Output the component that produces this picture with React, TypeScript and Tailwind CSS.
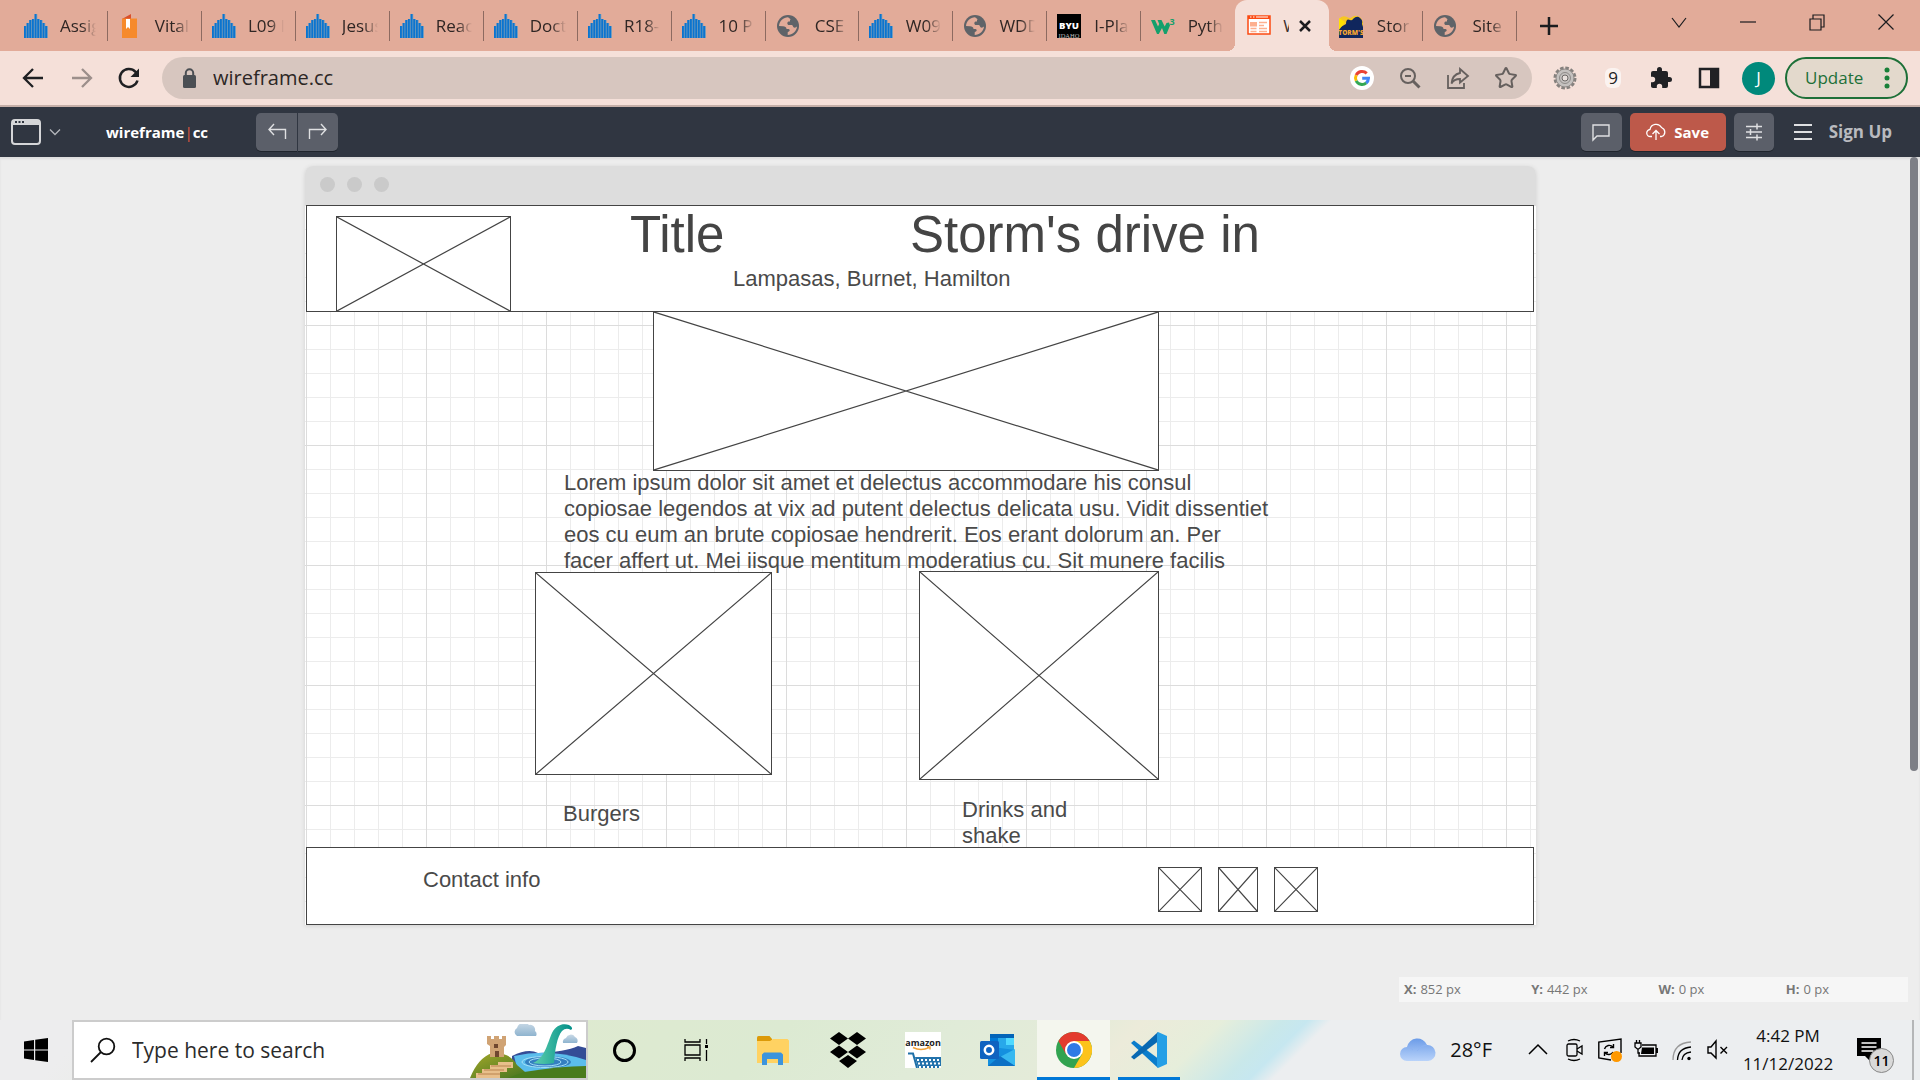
import React from "react";
import { Star } from "lucide-react";

type P = { className?: string };

const Idaho = () => (
  <svg viewBox="0 0 24 24" className="size-6 shrink-0" aria-hidden="true">
    {[12, 9, 6, 5, 0, 5, 6, 9, 12].map((y, i) => (
      <g key={i}>
        <rect x={i * 2.65} y={y} width="2.650" height={24 - y} fill="#6f9dbf" />
        <rect x={i * 2.65} y={y} width="1.850" height={24 - y} fill="#0b74cf" />
      </g>
    ))}
  </svg>
);
const Vital = () => (
  <svg viewBox="0 0 24 24" className="size-6 shrink-0" aria-hidden="true">
    <path d="M4 5 L13 0 V5Z" fill="#d9502c" />
    <path d="M4 4.500h15V24H4Z" fill="#f68a2c" />
    <path d="M8 5h4v10l-2-2-2 2Z" fill="#fff" />
  </svg>
);
const Globe = () => (
  <svg viewBox="0 0 24 24" className="size-6 shrink-0" aria-hidden="true">
    <circle cx="12" cy="12" r="11" fill="#5f6368" />
    <path d="M12 3.200c-4.500.2-8.600 3.500-9 8.800l4 .2c2 0 3.500 1 3.500 2.800h2c1 0 1.500 1 1 2l-1.800 1.200v2.800c4.700 0 9-3.600 9.300-8.400-1 1-2.500 1.400-3.500.6-.8-.8-.5-1.700-1.500-2.100h-3c-2-.3-2.200-2.800-.4-3.600l1.400-.1V5.500h1Z" fill="#e2ab99" />
  </svg>
);
const Byu = () => (
  <svg viewBox="0 0 24 24" className="size-6 shrink-0" aria-hidden="true">
    <rect width="24" height="24" fill="#000" />
    <text x="12" y="15" textAnchor="middle" fontSize="9.500" fontWeight="800" fill="#fff" fontFamily="Open Sans, sans-serif">BYU</text>
    <text x="12" y="23.500" textAnchor="middle" fontSize="6.500" fill="#bbb" fontFamily="Liberation Serif, serif">IDAHO</text>
  </svg>
);
const W3 = () => (
  <svg viewBox="0 0 24 24" className="size-6 shrink-0" aria-hidden="true">
    <path d="M0 6h4l3 6.500 1.200-2.500L6.500 6h4l3.200 6.500L15.500 9l2.500-.5 1 3L15.500 20h-2.200L11 14l-3.200 6H6Z" fill="#14a06c" />
    <text x="18.500" y="11" fontSize="9" fontWeight="700" fill="#14a06c" fontFamily="Open Sans, sans-serif">3</text>
  </svg>
);
const WireFav = () => (
  <svg viewBox="0 0 24 24" className="size-6 shrink-0" aria-hidden="true">
    <rect x="1" y="2" width="22" height="18" fill="#fff" stroke="#fb4a12" strokeWidth="1.500" />
    <path d="M1 2h22v3H1Z" fill="#fb4a12" />
    <path d="M3 3h1.500M6 3h1.500M9 3h12" stroke="#fff" strokeWidth="1.200" />
    <rect x="3" y="8" width="7" height="4.500" fill="#fdb08f" />
    <path d="M12 8.500h8M12 11.500h5M3.500 14.500h6M12 14.500h8M3.500 17.500h6M12 17.500h8" stroke="#fdb08f" strokeWidth="1.300" />
  </svg>
);
const StormFav = () => (
  <svg viewBox="0 0 24 24" className="size-6 shrink-0" aria-hidden="true">
    <path d="M0 5 Q3 1 8 3 Q11 5 13 3 Q17 0 22 4 L24 8V24H0Z" fill="#f6c622" />
    <path d="M7 10Q7 4 11 6 Q13 7 14 5 Q18 1 21 4 Q24 6 23 10 L24 13V24H0V14Z" fill="#10265d" />
    <path d="M0 4l6 4-6 8Z" fill="#ffe100" />
    <text x="12" y="21" textAnchor="middle" fontSize="6.500" fontWeight="800" fill="#f7a531" fontFamily="Open Sans, sans-serif">TORM'S</text>
  </svg>
);

const tabs: { label: string; Icon: React.FC; active?: boolean }[] = [
  { label: "Assig", Icon: Idaho },
  { label: "Vital", Icon: Vital },
  { label: "L09 I", Icon: Idaho },
  { label: "Jesus", Icon: Idaho },
  { label: "Reac", Icon: Idaho },
  { label: "Doct", Icon: Idaho },
  { label: "R18-", Icon: Idaho },
  { label: "10 P", Icon: Idaho },
  { label: "CSE", Icon: Globe },
  { label: "W09", Icon: Idaho },
  { label: "WDD", Icon: Globe },
  { label: "I-Pla", Icon: Byu },
  { label: "Pyth", Icon: W3 },
  { label: "W", Icon: WireFav, active: true },
  { label: "Stor", Icon: StormFav },
  { label: "Site", Icon: Globe },
];

function TabStrip() {
  return (
    <div className="flex h-[51px] items-stretch bg-[#e2ab99] pl-[14px]">
      <div className="flex max-w-[1503px] flex-1" role="tablist">
        {tabs.map(({ label, Icon, active }, i) =>
          active ? (
            <div key={i} className="relative flex min-w-0 flex-1 items-center rounded-t-xl bg-[#f5e0d9] before:absolute before:bottom-0 before:-left-2 before:size-2 before:bg-[radial-gradient(circle_at_0_0,transparent_8px,#f5e0d9_8px)] after:absolute after:-right-2 after:bottom-0 after:size-2 after:bg-[radial-gradient(circle_at_100%_0,transparent_8px,#f5e0d9_8px)]">
              <button role="tab" aria-selected="true" className="ml-3 flex items-center gap-3">
                <Icon />
                <span className="w-[6px] overflow-hidden text-[17px] text-[#3c2f2c]">{label}</span>
              </button>
              <button aria-label="Close tab" className="ml-1">
                <svg viewBox="0 0 24 24" className="size-6" stroke="#1b1c1f" strokeWidth="2.500"><path d="M7 7l10 10M17 7L7 17" /></svg>
              </button>
            </div>
          ) : (
            <div key={i} className="flex min-w-0 flex-1 items-center">
              <button role="tab" aria-selected="false" className="flex min-w-0 flex-1 items-center gap-3 pl-[10px]">
                <Icon />
                <span className="w-9 overflow-hidden text-[17px] whitespace-nowrap text-[#2f2624] [mask-image:linear-gradient(to_right,black_60%,transparent)]">{label}</span>
              </button>
              {tabs[i + 1]?.active ? null : <span className="h-[30px] w-px shrink-0 bg-[#8d6a60]" />}
            </div>
          ),
        )}
      </div>
      <button aria-label="New tab" className="ml-5">
        <svg viewBox="0 0 24 24" className="size-6" stroke="#1b1c1f" strokeWidth="2.500"><path d="M3 12h18M12 3v18" /></svg>
      </button>
      <div className="ml-auto flex h-[43px] items-stretch">
        {[
          ["Search tabs", "M5 8l7 9 7-9"],
          ["Minimize", "M4 12h16"],
          ["Restore", "M5 9h11v11H5ZM8 9V5h11v12h-3"],
          ["Close", "M4.500 4.500l15 15M19.500 4.500l-15 15"],
        ].map(([n, d]) => (
          <button key={n} aria-label={n} className="flex w-[69px] items-center justify-center">
            <svg viewBox="0 0 24 24" className="size-6" fill="none" stroke="#1b1c1f" strokeWidth="1.200"><path d={d} /></svg>
          </button>
        ))}
      </div>
    </div>
  );
}

const GoogleG = ({ className }: P) => (
  <svg viewBox="0 0 24 24" className={className} aria-hidden="true">
    <circle cx="12" cy="12" r="12" fill="#fff" />
    <g fill="none" strokeWidth="3">
      <path d="M6.200 9.200A6.500 6.500 0 0 1 16.700 7.400" stroke="#ea4335" />
      <path d="M6.200 9.100A6.500 6.500 0 0 0 6.200 14.900" stroke="#fbbc05" />
      <path d="M6.200 14.800A6.500 6.500 0 0 0 16.300 16.900" stroke="#34a853" />
      <path d="M12.200 12.200H18.500A6.500 6.500 0 0 1 16.200 17" stroke="#4285f4" />
    </g>
  </svg>
);

function Toolbar() {
  return (
    <div className="flex h-14 items-center border-b-2 border-[#c5afa8] bg-[#f5e0d9] pr-3 pl-[21px]">
      <div className="flex gap-6">
        <button aria-label="Back"><svg viewBox="0 0 24 24" className="size-6" fill="none" stroke="#1f2023" strokeWidth="2.300"><path d="M22 12H3.500M12 3L3 12l9 9" /></svg></button>
        <button aria-label="Forward"><svg viewBox="0 0 24 24" className="size-6" fill="none" stroke="#9c8f8b" strokeWidth="2.300"><path d="M3 12h18M13 3l9 9-9 9" /></svg></button>
        <button aria-label="Reload"><svg viewBox="0 0 24 24" className="size-6" fill="none" stroke="#1f2023" strokeWidth="2.500"><path d="M20.500 14.500A9 9 0 1 1 18.500 5.800L20 7.500" /><path d="M22 2.500v8.500h-8.500Z" fill="#1f2023" stroke="none" /></svg></button>
      </div>
      <div className="ml-[21px] flex h-[42px] flex-1 items-center rounded-full bg-[#d7c6bf] pr-[14px] pl-[18px]">
        <svg viewBox="0 0 18 24" className="h-6 w-[18px]" aria-hidden="true"><rect x="3" y="9" width="13" height="13" rx="1.500" fill="#4b4f54" /><path d="M5.800 9V7a3.700 3.700 0 0 1 7.400 0v2" fill="none" stroke="#4b4f54" strokeWidth="2" /></svg>
        <input aria-label="Address" defaultValue="wireframe.cc" className="ml-[15px] min-w-0 flex-1 bg-transparent text-[20px] text-[#2c2625] outline-none" />
        <div className="flex gap-6 text-[#66605e]">
          <button aria-label="Google search"><GoogleG className="size-6" /></button>
          <button aria-label="Zoom out"><svg viewBox="0 0 24 24" className="size-6" fill="none" stroke="currentColor" strokeWidth="2"><circle cx="10" cy="10" r="7" /><path d="M15 15l6.500 6.500" strokeWidth="3" /><path d="M7 10h6" /></svg></button>
          <button aria-label="Share"><svg viewBox="0 0 24 24" className="size-6" fill="none" stroke="currentColor" strokeWidth="1.800"><path d="M2 9v13h16v-5" /><path d="M14 3l8 7-8 6.500V13C10 13 7 14.500 5.500 17.500 6 12 9 8 14 7Z" /></svg></button>
          <button aria-label="Bookmark"><Star className="size-6" strokeWidth={2} strokeLinejoin="miter" /></button>
        </div>
      </div>
      <div className="ml-[21px] flex items-center gap-6">
        <button aria-label="Extension settings"><svg viewBox="0 0 24 24" className="size-6"><circle cx="12" cy="12" r="10" fill="none" stroke="#85817e" strokeWidth="3" strokeDasharray="3.500 1.736" /><circle cx="12" cy="12" r="9" fill="#c4c1bf" stroke="#8d8987" /><circle cx="12" cy="12" r="5.500" fill="none" stroke="#8e8b89" /><circle cx="12" cy="12" r="3" fill="#e8e0dd" stroke="#6d6a68" /></svg></button>
        <button aria-label="Nine extension" className="flex size-6 items-center justify-center rounded-full"><span className="rounded-md bg-white/60 px-[3px] text-[17px] leading-5 text-[#222]">9</span></button>
        <button aria-label="Extensions"><svg viewBox="0 0 24 24" className="size-6" fill="#202124"><path d="M20.500 11H19V7a2 2 0 0 0-2-2h-4V3.500a2.500 2.500 0 0 0-5 0V5H4a2 2 0 0 0-2 2v3.800h1.500a2.700 2.700 0 0 1 0 5.400H2V20c0 1.100.9 2 2 2h3.800v-1.500a2.700 2.700 0 0 1 5.400 0V22H17a2 2 0 0 0 2-2v-4h1.500a2.500 2.500 0 0 0 0-5Z" /></svg></button>
        <button aria-label="Side panel"><svg viewBox="0 0 24 24" className="size-6"><rect x="3" y="3" width="18" height="18" fill="none" stroke="#202124" strokeWidth="2.500" /><rect x="13" y="3" width="8" height="18" fill="#202124" /></svg></button>
        <button aria-label="Profile" className="-ml-[3px] flex size-[33px] items-center justify-center rounded-full bg-[#00897b] text-[17px] text-white">J</button>
      </div>
      <button className="ml-[10px] flex h-[42px] w-[123px] items-center justify-between rounded-full border-2 border-[#1d7038] bg-[#e3d9cc] pr-4 pl-[18px] text-[17px] text-[#1d7038]">
        Update
        <svg viewBox="0 0 6 24" className="h-6 w-[6px]" fill="#188038" aria-hidden="true"><circle cx="3" cy="4" r="2.500" /><circle cx="3" cy="12" r="2.500" /><circle cx="3" cy="20" r="2.500" /></svg>
      </button>
    </div>
  );
}

function EditorBar() {
  const tool = "flex h-[38px] items-center justify-center bg-[#5b5f69] shadow-[0_1px_0_#1f242c]";
  return (
    <header className="flex h-[50px] items-center bg-[#303641] pr-7 pl-[11px]">
      <button aria-label="Canvas size" className="flex items-center gap-2">
        <svg viewBox="0 0 30 26" className="h-[26px] w-[30px]"><rect x="1" y="1" width="28" height="24" rx="3" fill="none" stroke="#d5d6d8" strokeWidth="2" /><path d="M1 1h28v5H1Z" fill="#d5d6d8" /><path d="M4 3h2M7.500 3h2M11 3h2" stroke="#303641" strokeWidth="2" /></svg>
        <svg viewBox="0 0 12 12" className="size-3" fill="none" stroke="#b3b6bb" strokeWidth="1.300"><path d="M1 3.500l5 5 5-5" /></svg>
      </button>
      <a href="#" className="ml-[45px] text-[15px] font-bold text-white">wireframe<span className="font-normal text-[#e0573e]">|</span>cc</a>
      <div className="ml-12 flex gap-px">
        <button aria-label="Undo" className={tool + " w-[41px] rounded-l-[5px]"}>
          <svg viewBox="0 0 20 20" className="size-5" fill="none" stroke="#dfe0e2" strokeWidth="1.400"><path d="M7 2L2 7.500 7 13M2 7.500h16.500V17" /></svg>
        </button>
        <button aria-label="Redo" className={tool + " w-10 rounded-r-[5px]"}>
          <svg viewBox="0 0 20 20" className="size-5" fill="none" stroke="#dfe0e2" strokeWidth="1.400"><path d="M13 2l5 5.500-5 5.500M18 7.500H1.500V17" /></svg>
        </button>
      </div>
      <div className="ml-auto flex items-center gap-2">
        <button aria-label="Comments" className={tool + " w-[41px] rounded-[5px]"}>
          <svg viewBox="0 0 20 20" className="size-5" fill="none" stroke="#dfe0e2" strokeWidth="1.400"><path d="M2 3h16v11H6l-4 4Z" /></svg>
        </button>
        <button className="flex h-[38px] w-24 items-center justify-center gap-2 rounded-[5px] bg-[#bd594a] text-[15px] font-bold text-white shadow-[0_1px_0_#1f242c]">
          <svg viewBox="0 0 20 20" className="size-5" fill="none" stroke="#fff" strokeWidth="1.300" aria-hidden="true"><path d="M6 14.500H4.500a3.500 3.500 0 0 1-.5-7A6.200 6.200 0 0 1 15.500 5.500c4.500 2 4.300 7.500 0 9H14M10 18V8.500M6.500 12L10 8.500l3.500 3.500" /></svg>
          Save
        </button>
        <button aria-label="Settings" className={tool + " w-10 rounded-[5px]"}>
          <svg viewBox="0 0 20 20" className="size-5" fill="none" stroke="#dfe0e2" strokeWidth="1.500"><path d="M2 4.500h16M2 10h16M2 15.500h16M13 1.500v6M6.500 7v6M13 12.500v6" /></svg>
        </button>
        <button className="ml-[11px] flex items-center gap-4 text-[17px] font-bold text-[#b9bbbf]">
          <svg viewBox="0 0 20 20" className="size-5" stroke="#dfe0e2" strokeWidth="1.800" aria-hidden="true"><path d="M1 3h18M1 10h18M1 17h18" /></svg>
          Sign Up
        </button>
      </div>
    </header>
  );
}

const ImageBox = ({ className }: P) => (
  <div className={"absolute border border-[#444] bg-white " + className}>
    <svg viewBox="0 0 100 100" preserveAspectRatio="none" className="block size-full" stroke="#444" aria-hidden="true">
      <path d="M0 0L100 100M100 0L0 100" vectorEffect="non-scaling-stroke" strokeWidth="1.200" />
    </svg>
  </div>
);

const canvasText = "font-['Liberation_Sans',Arial,sans-serif] text-[22px] leading-[26px] text-[#4a4a4a]";
const canvasTitle = "font-['Liberation_Sans',Arial,sans-serif] text-[51px] leading-[58px] text-[#444]";

function Workspace() {
  return (
    <main className="relative min-h-0 flex-1 bg-[#ededed] shadow-[inset_0_2px_2px_#dedede]">
      <div className="flex justify-center pt-[9px] pr-[79px]">
        <section className="w-[1231px] shrink-0 rounded-t-lg shadow-[0_1px_4px_#d0d0d0]">
          <div className="flex h-[39px] items-center gap-3 rounded-t-lg bg-[#ddd] pb-[3px] pl-[15px]">
            <span className="size-[15px] rounded-full bg-[#cacaca]" />
            <span className="size-[15px] rounded-full bg-[#cacaca]" />
            <span className="size-[15px] rounded-full bg-[#cacaca]" />
          </div>
          {/* Free-form drawing sheet: items sit where the user dropped them. */}
          <div className="relative h-[720px] bg-white bg-[linear-gradient(to_right,#dcdcdc_1px,transparent_1px),linear-gradient(to_bottom,#dcdcdc_1px,transparent_1px),linear-gradient(to_right,#ececec_1px,transparent_1px),linear-gradient(to_bottom,#ececec_1px,transparent_1px)] bg-[size:120px_120px,120px_120px,24px_24px,24px_24px] bg-position-[1px_0px]">
            <div className="absolute top-0 left-[1px] h-[107px] w-[1228px] border border-[#444] bg-white" />
            <ImageBox className="top-[11px] left-[31px] h-24 w-[175px]" />
            <h1 className={"absolute top-[1px] left-[325px] " + canvasTitle}>Title</h1>
            <h2 className={"absolute top-[1px] left-[605px] whitespace-nowrap " + canvasTitle}>Storm's drive in</h2>
            <p className={"absolute top-[61px] left-[428px] " + canvasText}>Lampasas, Burnet, Hamilton</p>
            <ImageBox className="top-[106px] left-[348px] h-[160px] w-[506px]" />
            <p className={"absolute top-[265px] left-[259px] whitespace-nowrap " + canvasText}>
              Lorem ipsum dolor sit amet et delectus accommodare his consul<br />
              copiosae legendos at vix ad putent delectus delicata usu. Vidit dissentiet<br />
              eos cu eum an brute copiosae hendrerit. Eos erant dolorum an. Per<br />
              facer affert ut. Mei iisque mentitum moderatius cu. Sit munere facilis
            </p>
            <ImageBox className="top-[367px] left-[230px] h-[203px] w-[237px]" />
            <ImageBox className="top-[366px] left-[614px] h-[209px] w-[240px]" />
            <p className={"absolute top-[596px] left-[258px] " + canvasText}>Burgers</p>
            <p className={"absolute top-[592px] left-[657px] " + canvasText}>Drinks and<br />shake</p>
            <div className="absolute top-[642px] left-[1px] h-[78px] w-[1228px] border border-[#444] bg-white" />
            <p className={"absolute top-[662px] left-[118px] " + canvasText}>Contact info</p>
            <ImageBox className="top-[662px] left-[853px] h-[45px] w-11" />
            <ImageBox className="top-[662px] left-[913px] h-[45px] w-10" />
            <ImageBox className="top-[662px] left-[969px] h-[45px] w-11" />
          </div>
        </section>
      </div>
      <dl className="absolute right-3 bottom-[18px] grid h-[25px] w-[509px] grid-cols-4 items-center bg-[#f6f6f6] text-[13px] text-[#777]">
        {[["X:", "852 px"], ["Y:", "442 px"], ["W:", "0 px"], ["H:", "0 px"]].map(([k, v]) => (
          <div key={k} className="flex gap-1 pl-[5px]"><dt className="font-bold">{k}</dt><dd>{v}</dd></div>
        ))}
      </dl>
      <div className="absolute top-0 right-[2px] h-[614px] w-2 rounded-full bg-[#7d7f86]" />
    </main>
  );
}

const SearchArt = () => (
  <svg viewBox="0 0 116 54" className="h-[54px] w-[116px] self-end" aria-hidden="true">
    <defs>
      <linearGradient id="cl" x1="0" y1="0" x2="0" y2="1"><stop offset="0" stopColor="#c9d9e6" /><stop offset="1" stopColor="#8fb4cf" /></linearGradient>
      <linearGradient id="hill" x1="0" y1="0" x2="1" y2="1"><stop offset="0" stopColor="#a5a82a" /><stop offset="1" stopColor="#3f7220" /></linearGradient>
      <linearGradient id="nes" x1="0" y1="0" x2="1" y2="0"><stop offset="0" stopColor="#5fd0ae" /><stop offset="1" stopColor="#008e88" /></linearGradient>
    </defs>
    <path d="M47 12a4.500 4.500 0 0 1 0-8 7 7 0 0 1 12-3 5 5 0 0 1 6 6 4 4 0 0 1 1 5Z" fill="url(#cl)" />
    <path d="M93 19a4 4 0 0 1 3-5 5 5 0 0 1 9-1 4 4 0 0 1 2 6Z" fill="url(#cl)" />
    <path d="M42 32Q58 24 68 29Q95 28 108 22L116 24V54H42Z" fill="#344c96" />
    <path d="M44 32Q80 24 116 36V48H48Z" fill="#5bbdec" />
    <ellipse cx="78" cy="38" rx="23" ry="6" fill="#347fc0" />
    <ellipse cx="75" cy="38" rx="23" ry="5.500" fill="none" stroke="#a5e0f8" />
    <ellipse cx="75" cy="38" rx="16" ry="4" fill="none" stroke="#a5e0f8" />
    <path d="M63 39C75 34 77 20 82 9C86 1 93-1 99 1Q104 4 101 6Q96 3 92 7C87 13 85 26 84 39Q75 41 63 39Z" fill="url(#nes)" />
    <path d="M0 54Q8 34 22 29Q40 28 47 41L62 54Z" fill="url(#hill)" />
    <path d="M54 48Q90 42 116 42V54H38Z" fill="#497b1d" />
    <path d="M17 12h4v3h3v-3h5v3h3v-3h4v9l-2 2v10H20V22l-3-2Z" fill="#d0a374" />
    <path d="M24 20h4v4h-4ZM25 27h4v6h-4Z" fill="#70472f" />
    <path d="M28 38h15v6h-6v4h-7v6H6v-5h6v-4h8v-4h8Z" fill="#e8bf8b" />
    <path d="M8 50h22M14 46h20M21 42h20" stroke="#b9834e" />
  </svg>
);

function Taskbar() {
  const app = "flex w-[75px] items-center justify-center";
  return (
    <footer className="flex h-[60px] shrink-0 items-stretch bg-[linear-gradient(135deg,#ededee_0,#ededee_70px,#deead0_400px,#dcead2_560px,#e0ebd8_680px,#e4ebd9_770px,#ecebda_810px,#e6eedb_865px,#c9e8ea_908px,#c6e7f0_925px,#eceef0_942px)]">
      <button aria-label="Start" className="flex w-[72px] items-center justify-center">
        <svg viewBox="0 0 24 24" className="size-6"><path d="M0 3.500L10 2v9.500H0ZM11.200 1.800L24 0v11.500H11.200ZM0 12.500h10V22L0 20.600ZM11.200 12.500H24V24l-12.800-1.800Z" /></svg>
      </button>
      <label className="flex w-[516px] items-center border-2 border-[#ccc] bg-white pl-4">
        <svg viewBox="0 0 26 26" className="size-[26px]" fill="none" stroke="#111" strokeWidth="1.800" aria-hidden="true"><circle cx="16.500" cy="9.500" r="7.800" /><path d="M11 15L1 25" /></svg>
        <input aria-label="Search" placeholder="Type here to search" className="ml-4 min-w-0 flex-1 bg-transparent pt-[2px] text-[21px] outline-none placeholder:text-[#2b2b2b]" />
        <SearchArt />
      </label>
      <button aria-label="Cortana" className="flex w-[72px] items-center justify-center"><span className="size-[23px] rounded-full border-[3px] border-black" /></button>
      <button aria-label="Task view" className="flex w-[72px] items-center justify-center">
        <svg viewBox="0 0 24 24" className="size-6" fill="none" stroke="#000" strokeWidth="1.300"><path d="M1 1v3h15V1M1 7h15v10H1ZM1 23v-3h15v3M22.500 1v5M22.500 12v11" /><rect x="21" y="7" width="3" height="3" fill="#000" stroke="none" /></svg>
      </button>
      <div className="flex pr-[2px] pl-[3px]">
        <button aria-label="File Explorer" className={app}>
          <svg viewBox="0 0 32 32" className="size-8"><path d="M0 3.500Q0 2 1.500 2h11L15 5v5H0Z" fill="#dc9a08" /><path d="M0 7h13l3-2h14.500L32 6.500V29H0Z" fill="#ffd262" /><path d="M5 31V20.500L7 18.500h17l2 2V31h-5v-6H10v6Z" fill="#3d94dc" /></svg>
        </button>
        <button aria-label="Dropbox" className={app}>
          <svg viewBox="0 0 36 36" className="size-9"><path d="M9 0l9 6.500L9 13 0 6.500ZM27 0l9 6.500-9 6.500-9-6.500ZM9 13.500l9 6.500-9 6.500L0 20ZM27 13.500l9 6.500-9 6.500-9-6.500ZM18 23l9 6-9 7-9-7Z" /></svg>
        </button>
        <button aria-label="Amazon" className={app}>
          <svg viewBox="0 0 36 36" className="size-9"><rect width="36" height="36" fill="#fff" /><text x="18" y="14" textAnchor="middle" fontSize="9" fontWeight="700" fontFamily="Open Sans, sans-serif" fill="#222">amazon</text><path d="M8 15.500Q16 19.500 24 15.500M22 15h3v2.500" fill="none" stroke="#f0a23a" strokeWidth="1.500" /><path d="M3 21.500h5l4 14.500" fill="none" stroke="#1e70a8" strokeWidth="2" /><path d="M10 25h26v11H13Z" fill="#2373ac" /><path d="M12 28h24M13 31.500h23M14 35h22" stroke="#fff" strokeWidth="1.800" strokeDasharray="2 2" /></svg>
        </button>
        <button aria-label="Outlook" className={app}>
          <svg viewBox="0 0 36 36" className="size-9"><path d="M10 2h24v16H10Z" fill="#28a8ea" /><path d="M10 2h24v4H10Z" fill="#0364b8" /><path d="M10 6h8v12h-8Z" fill="#0078d4" /><path d="M26 6h8v7h-8Z" fill="#50d9ff" /><path d="M8 16h12l15 2v16H8Z" fill="#1490df" /><path d="M35 17L20 25l15 9Z" fill="#37b8f0" /><path d="M20 24L8 34h27Z" fill="#0c70c5" /><rect y="9" width="19" height="18" rx="1.500" fill="#0f63c0" /><circle cx="9" cy="18" r="4.200" fill="none" stroke="#fff" strokeWidth="2.500" /></svg>
        </button>
      </div>
      <button aria-label="Chrome" className="flex w-[73px] items-center justify-center border-b-[3px] border-[#0078d7] bg-[#f4f6ee] pt-[3px]">
        <svg viewBox="0 0 36 36" className="size-9"><circle cx="18" cy="18" r="18" fill="#31a350" /><path d="M18 18L10.200 22.500 2.400 9A18 18 0 0 1 33.600 9H18Z" fill="#e33b2e" /><path d="M18 9h15.600A18 18 0 0 1 18 36l7.800-13.500Z" fill="#fcc31c" /><circle cx="18" cy="18" r="9" fill="#fff" /><circle cx="18" cy="18" r="7" fill="#2e7ae6" /></svg>
      </button>
      <button aria-label="Visual Studio Code" className="ml-2 flex w-[62px] items-center justify-center border-b-[3px] border-[#0078d7] pt-[3px]">
        <svg viewBox="0 0 36 36" className="size-9"><path d="M0 11l3-2.500 24 18V36Z" fill="#0a7dcc" /><path d="M0 25l3 2.500L27 9.500V0Z" fill="#0868b2" /><path d="M27 0l9 4v28l-9 4-1-2V2Z" fill="#259fe6" /></svg>
      </button>
      <div className="ml-auto flex items-center">
        <button className="flex items-center gap-[14px] text-[20px] text-[#111]">
          <svg viewBox="0 0 36 28" className="h-7 w-9" aria-hidden="true"><defs><linearGradient id="wc" x1="0" y1="0" x2="0" y2="1"><stop offset="0" stopColor="#6c9ce8" /><stop offset="1" stopColor="#b9d3fa" /></linearGradient></defs><path d="M7 25a7 7 0 0 1 0-14A10.500 10.500 0 0 1 27 9a8 8 0 0 1 1 16Z" fill="url(#wc)" /><path d="M7 11q4 0 6 3M17 15q4-6 10-6" stroke="#8db3f2" fill="none" /></svg>
          28°F
        </button>
        <div className="ml-[34px] flex items-center gap-3">
          <button aria-label="Hidden icons"><svg viewBox="0 0 24 24" className="size-6" fill="none" stroke="#000" strokeWidth="1.500"><path d="M3 16l9-9 9 9" /></svg></button>
          <button aria-label="Camera"><svg viewBox="0 0 24 24" className="size-6" fill="none" stroke="#000" strokeWidth="1.300"><rect x="5" y="6" width="10" height="12" rx="1.500" /><path d="M15 11l5-3v8l-5-3M6 3q6-3 12 0M6 21q6 3 12 0" /></svg></button>
          <button aria-label="Updates"><svg viewBox="0 0 24 24" className="size-6" fill="none" stroke="#000" strokeWidth="1.400"><path d="M13 22L.8 20V4L23 1v14" /><path d="M6.500 11A5 5 0 0 1 15 9M15.500 6v3.500H12M15 14A5 5 0 0 1 7 15M6.500 18v-3.500H10" /><circle cx="18.500" cy="18.500" r="5.500" fill="#ff9800" stroke="none" /></svg></button>
          <button aria-label="Battery"><svg viewBox="0 0 24 24" className="size-6" fill="none" stroke="#000" strokeWidth="1.300"><path d="M8 7h14v11H5v-3M23.300 10v5M1 5h6v4L4 11.500 1 9ZM2.500 5V2M5.500 5V2M4 11v4h2" /><path d="M8 9.500h12v6.500H7Z" fill="#000" stroke="none" /></svg></button>
          <button aria-label="Wi-Fi"><svg viewBox="0 0 24 24" className="size-6" fill="none" stroke="#000" strokeWidth="1.300"><path d="M3 22Q3 5 21 4" stroke="#999" /><path d="M7.500 22Q8 10 21 9M12 22q.5-7 9-8" /><circle cx="19" cy="20.500" r="1.700" fill="#000" stroke="none" /></svg></button>
          <button aria-label="Muted"><svg viewBox="0 0 24 24" className="size-6" fill="none" stroke="#000" strokeWidth="1.400"><path d="M2 9v6h3l5 5V3L5 9ZM14.500 9l6.500 6.500M21 9l-6.500 6.500" /></svg></button>
        </div>
        <time className="ml-[10px] w-24 text-center text-[17px] leading-7 text-[#111]">4:42 PM<br />11/12/2022</time>
        <button aria-label="Notifications" className="relative ml-[21px] flex h-[60px] w-[55px] items-center">
          <svg viewBox="0 0 24 24" className="size-6"><path d="M0 0h24v18H14v6l-6-6H0Z" /><path d="M4.500 5h15M4.500 9h15M4.500 13h12" stroke="#fff" strokeWidth="1.300" /></svg>
          <span className="absolute top-7 left-3 flex size-[25px] items-center justify-center rounded-full border border-[#888] bg-[#d9d9d9] text-[14px] font-semibold text-black">11</span>
        </button>
        <span className="mr-[6px] h-full w-[2px] bg-[#b5b6b8]" />
      </div>
    </footer>
  );
}

export default function App() {
  return (
    <div className="flex h-screen min-h-[1000px] flex-col overflow-hidden font-['Open_Sans','Noto_Sans',sans-serif]">
      <TabStrip />
      <Toolbar />
      <EditorBar />
      <Workspace />
      <Taskbar />
    </div>
  );
}
